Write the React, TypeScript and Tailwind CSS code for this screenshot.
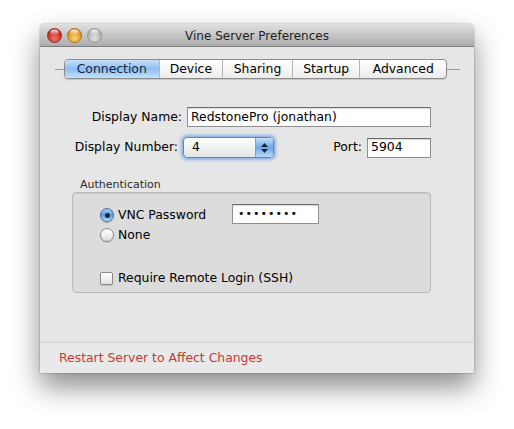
import React from "react";

const font = { fontFamily: '"DejaVu Sans", "Lucida Grande", sans-serif' };

function Light({ id, from, to, edge }: { id: string; from: string; to: string; edge: string }) {
  return (
    <svg width="15" height="15" viewBox="0 0 15 15">
      <defs>
        <radialGradient id={id} cx="50%" cy="70%" r="60%">
          <stop offset="0%" stopColor={from} />
          <stop offset="100%" stopColor={to} />
        </radialGradient>
        <linearGradient id={id + "h"} x1="0" y1="0" x2="0" y2="1">
          <stop offset="0%" stopColor="#ffffff" stopOpacity="0.9" />
          <stop offset="100%" stopColor="#ffffff" stopOpacity="0" />
        </linearGradient>
      </defs>
      <circle cx="7.5" cy="7.5" r="7" fill={`url(#${id})`} stroke={edge} strokeWidth="0.8" />
      <ellipse cx="7.5" cy="4.3" rx="4.3" ry="2.8" fill={`url(#${id}h)`} />
    </svg>
  );
}

const tabs = [
  { label: "Connection", w: "w-[95px]" },
  { label: "Device", w: "w-[64px]" },
  { label: "Sharing", w: "w-[70px]" },
  { label: "Startup", w: "w-[68px]" },
  { label: "Advanced", w: "w-[86px]" },
];

function Radio({ on }: { on?: boolean }) {
  if (on) {
    return (
      <span className="flex h-[14px] w-[14px] items-center justify-center rounded-full border border-[#4a6f9c] bg-gradient-to-b from-[#a9cdf2] via-[#5d9ae0] to-[#b6dcfb] shadow-[0_1px_1px_rgba(0,0,0,0.2)]">
        <span className="h-[5px] w-[5px] rounded-full bg-[#1c2a3a]" />
      </span>
    );
  }
  return (
    <span className="block h-[14px] w-[14px] rounded-full border border-[#8a8a8a] bg-gradient-to-b from-[#ffffff] via-[#f0f0f0] to-[#dcdcdc] shadow-[0_1px_1px_rgba(0,0,0,0.15)]" />
  );
}

export default function App() {
  return (
    <div className="h-[429px] w-[514px] bg-white pl-[40px] pt-[24px] text-[12.4px] text-black" style={font}>
      <div className="flex h-[349px] w-[434px] flex-col overflow-hidden rounded-t-[5px] shadow-[0_14px_28px_rgba(0,0,0,0.45),0_0_2px_rgba(0,0,0,0.4)]">
        {/* title bar */}
        <div className="relative flex h-[23px] items-center justify-center border-b border-[#7d7d7d] bg-gradient-to-b from-[#e0e0e0] to-[#acacac] pt-[2px]">
          <div className="absolute left-[7px] top-[4px] flex gap-[5px]">
            <Light id="r" from="#f07a6e" to="#c21a12" edge="#8e1d16" />
            <Light id="y" from="#fad47a" to="#d9880d" edge="#a0680e" />
            <Light id="g" from="#e4e4e4" to="#a8a8a8" edge="#8f8f8f" />
          </div>
          <span className="text-[12px] text-[#1e1e1e]">Vine Server Preferences</span>
        </div>

        {/* body */}
        <div className="flex h-[295px] flex-col bg-[#e6e6e6]">
          <div className="relative mt-[12px] h-[20px]">
            <div className="absolute left-[15px] top-[10px] h-px w-[405px] bg-[#9c9c9c]" />
            <div className="relative ml-[24px] flex h-[20px] w-[383px] overflow-hidden rounded-[4px] border border-[#8c8c8c] bg-gradient-to-b from-[#ffffff] to-[#ececec] shadow-[0_1px_1px_rgba(0,0,0,0.15)]">
              {tabs.map((t, i) => (
                <div
                  key={t.label}
                  className={`${t.w} flex items-center justify-center leading-none ${i < tabs.length - 1 ? "border-r border-[#b4b4b4]" : ""} ${
                    i === 0 ? "bg-gradient-to-b from-[#c9e1fb] via-[#8cbef1] to-[#c3e3ff] text-[#15233a]" : ""
                  }`}
                >
                  {t.label}
                </div>
              ))}
            </div>
          </div>

          {/* display name */}
          <div className="mt-[28px] flex h-[20px] items-center gap-[5px]">
            <span className="w-[142px] text-right">Display Name:</span>
            <div className="flex h-[20px] w-[244px] items-center border border-[#8f8f8f] border-t-[#6d6d6d] bg-white pl-[3px] shadow-[inset_0_1px_1px_rgba(0,0,0,0.15)]">
              RedstonePro (jonathan)
            </div>
          </div>

          {/* display number + port */}
          <div className="mt-[10px] flex h-[21px] items-center">
            <span className="w-[138px] text-right">Display Number:</span>
            <div className="ml-[5px] flex h-[21px] w-[91px] overflow-hidden rounded-[4px] border border-[#5a86c2] bg-gradient-to-b from-[#ffffff] to-[#e4e4e4] shadow-[0_0_3px_2px_rgba(110,160,230,0.75)]">
              <span className="flex flex-1 items-center pl-[8px]">4</span>
              <span className="flex w-[18px] flex-col items-center justify-center gap-[2px] border-l border-[#7a9fd0] bg-gradient-to-b from-[#c6e0fb] via-[#6ea7e8] to-[#b8dafc]">
                <svg width="7" height="4" viewBox="0 0 7 4"><path d="M0 4 L3.5 0 L7 4 Z" fill="#1a2638" /></svg>
                <svg width="7" height="4" viewBox="0 0 7 4"><path d="M0 0 L3.5 4 L7 0 Z" fill="#1a2638" /></svg>
              </span>
            </div>
            <span className="w-[88px] text-right">Port:</span>
            <div className="ml-[5px] flex h-[20px] w-[64px] items-center border border-[#8f8f8f] border-t-[#6d6d6d] bg-white pl-[3px] shadow-[inset_0_1px_1px_rgba(0,0,0,0.15)]">
              5904
            </div>
          </div>

          {/* authentication */}
          <div className="ml-[40px] mt-[19px] h-[15px] text-[11px] leading-[15px] text-[#2a2a2a]">Authentication</div>
          <div className="ml-[32px] flex h-[101px] w-[359px] flex-col rounded-[4px] border border-[#b9b9b9] bg-[#dcdcdc] pt-[12px] shadow-[inset_0_1px_1px_rgba(0,0,0,0.08)]">
            <div className="flex h-[20px] items-center">
              <span className="ml-[27px]"><Radio on /></span>
              <span className="ml-[4px] w-[114px]">VNC Password</span>
              <div className="-mt-[2px] flex h-[20px] w-[87px] items-center border border-[#8f8f8f] border-t-[#6d6d6d] bg-white pl-[5px] text-[11px] tracking-[1px] shadow-[inset_0_1px_1px_rgba(0,0,0,0.15)]">
                ••••••••
              </div>
            </div>
            <div className="flex h-[20px] items-center">
              <span className="ml-[27px]"><Radio /></span>
              <span className="ml-[4px]">None</span>
            </div>
            <div className="mt-[23px] flex h-[20px] items-center">
              <span className="ml-[27px] h-[13px] w-[13px] rounded-[2px] border border-[#8a8a8a] bg-gradient-to-b from-[#ffffff] to-[#e2e2e2] shadow-[0_1px_1px_rgba(0,0,0,0.15)]" />
              <span className="ml-[5px]">Require Remote Login (SSH)</span>
            </div>
          </div>
        </div>

        {/* footer */}
        <div className="flex h-[31px] items-center border-t border-[#cfcfcf] bg-[#e9e9e9] pl-[19px] text-[#c63a2f]">
          Restart Server to Affect Changes
        </div>
      </div>
    </div>
  );
}
